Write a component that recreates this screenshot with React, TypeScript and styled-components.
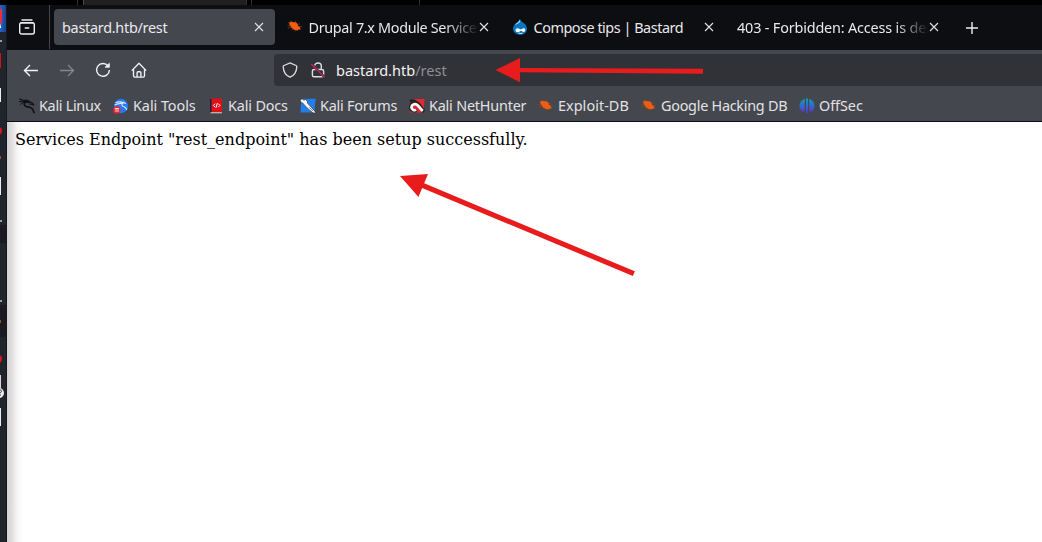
import React from "react";
import styled, { createGlobalStyle } from "styled-components";

const Global = createGlobalStyle`
  * { box-sizing: border-box; }
  html, body { margin: 0; width: 1042px; height: 542px; overflow: hidden; background: #000; }
`;

const Desktop = styled.div`
  position: relative;
  width: 1042px;
  height: 542px;
  display: flex;
  flex-direction: column;
  background: #000;
  font-family: "Noto Sans", sans-serif;
`;
const Taskbar = styled.div`
  height: 5px;
  display: flex;
  padding-left: 77px;
`;
const TaskItem = styled.div<{ $w: number; $on?: boolean }>`
  width: ${(p) => p.$w}px;
  border-left: 1px solid ${(p) => (p.$on ? "#4a4a4a" : "#303030")};
  background: ${(p) => (p.$on ? "#202020" : "#000")};
`;
const Body = styled.div`
  display: flex;
  height: 537px;
`;
const Dock = styled.div`
  width: 7px;
  flex: none;
  background: #20242c;
  overflow: hidden;
`;
const Browser = styled.div`
  width: 1035px;
  display: flex;
  flex-direction: column;
`;
const TabBar = styled.div`
  height: 45px;
  display: flex;
  align-items: flex-start;
  background: #0d0e12;
  color: #fbfbfe;
`;
const ViewButton = styled.div`
  width: 43px;
  height: 44px;
  padding: 13px 0 0 11px;
  border-right: 1px solid #45474d;
`;
const Tabs = styled.div`
  display: flex;
  gap: 4px;
  padding: 4px 0 0 4px;
`;
const Tab = styled.div<{ $active?: boolean }>`
  width: 221px;
  height: 36px;
  border-radius: 4px;
  background: ${(p) => (p.$active ? "#45474f" : "transparent")};
  display: flex;
  align-items: center;
  padding: 0 10px 0 8px;
`;
const Favicon = styled.span`
  display: flex;
  width: 16px;
  margin-right: 5.5px;
`;
const TabTitle = styled.span<{ $ls: number; $fade?: boolean }>`
  flex: 1;
  min-width: 0;
  overflow: hidden;
  white-space: nowrap;
  font-size: 14.4px;
  line-height: 22px;
  padding-top: 2px;
  letter-spacing: ${(p) => p.$ls}px;
  color: #e9e9ec;
  ${(p) => p.$fade && "mask-image: linear-gradient(to left, transparent 0, #000 34px); margin-right: -1px;"}
`;
const CloseBox = styled.span`
  flex: none;
  width: 12px;
  height: 36px;
  display: flex;
  align-items: center;
  justify-content: center;
`;
const NewTab = styled.div`
  padding: 16px 0 0 15px;
  display: flex;
`;
const NavBar = styled.div`
  height: 37px;
  display: flex;
  align-items: center;
  padding-top: 3px;
  background: #45474e;
`;
const NavButtons = styled.div`
  width: 267px;
  display: flex;
  gap: 20px;
  padding-left: 16px;
`;
const UrlBar = styled.div`
  flex: 1;
  height: 32px;
  border-radius: 4px 0 0 4px;
  background: #313237;
  display: flex;
  align-items: center;
  padding-left: 8px;
  gap: 12px;
`;
const UrlText = styled.span`
  font-size: 14.5px;
  letter-spacing: 0.02px;
  color: #f3f3f5;
  margin-left: -2px;
  span { color: #8e8f94; }
`;
const Bookmarks = styled.div`
  height: 35px;
  background: #45474e;
  border-bottom: 1px solid #0d0e12;
  display: flex;
  padding-left: 12px;
`;
const Bookmark = styled.div<{ $w: number }>`
  width: ${(p) => p.$w}px;
  flex: none;
  height: 38px;
  display: flex;
  align-items: center;
  gap: 4px;
`;
const BookmarkLabel = styled.span<{ $ls: number }>`
  font-size: 14.4px;
  line-height: 20px;
  letter-spacing: ${(p) => p.$ls}px;
  white-space: nowrap;
  color: #e2e2e5;
`;
const Page = styled.main`
  flex: 1;
  padding: 8px;
  background: linear-gradient(to right, #d4d0d2 0, #e2dfe0 5px, #f6f5f5 10px, #fff 16px);
  font: 16px/19px "DejaVu Serif", serif;
  color: #000;
`;
const Annotations = styled.svg`
  position: absolute;
  left: 0;
  top: 0;
  pointer-events: none;
`;

const Close = () => (
  <CloseBox>
    <svg width="10" height="10" viewBox="0 0 10 10" stroke="#e4e4e7" strokeWidth="1.1">
      <path d="M1 1l8 8M9 1L1 9" />
    </svg>
  </CloseBox>
);
const Bug = () => (
  <svg width="16" height="16" viewBox="0 0 16 16">
    <path d="M2 4l2-1.6 2.3.9 1.3-.3 2.2.9 1.2 1.7-.2 1 2 1.3.9 2.6-2.3.1-.5 1-3.1-.7-2.7-1.5-1.4-1.9L2.6 6z" fill="#ee5d10" />
    <path d="M3 4.3L1 3.4M3.5 6.8L.5 6.6M4.5 8.3l-3.7.9M6.5 9.9L4.8 11.4M4.6 3.2L3.8 1.7M7.8 4l1.1-2.1M10.1 5.6l2.8-.8M12 7.8l3.2-.3M9 11l-1.4 1.4" fill="none" stroke="#a5471d" strokeWidth=".6" />
  </svg>
);
const Drupal = () => (
  <svg width="16" height="16" viewBox="0 0 16 16">
    <path d="M8 .2c.7 2 2.2 2.4 4 4 2.1 1.8 3 3.7 3 5.5 0 3.7-3 6.1-7 6.1S1 13.3 1 9.6c0-2 1.2-3.8 3.1-5.3C5.7 3.2 7.3 2.2 8 .2z" fill="#0875be" />
    <path d="M8 .2C7.4 2.4 4.2 3.9 2.7 6c1.6-.9 4.9-1.4 5.6-3.6z" fill="#8ccdf0" />
    <path d="M3.5 11.3c0-1.5 1.3-2.2 2.5-2 1.3.2 1.8 1.2 2.7 1.2.8 0 1.6-1.3 2.9-1.3 1 0 1.7.7 1.7 1.7 0 1.2-.7 2-1.7 2-1.1 0-1.8-1.2-2.6-1.2-.9 0-1.6 1.5-3.1 1.5-1.3 0-2.4-.7-2.4-1.9z" fill="#fff" />
    <path d="M6.4 14c1.4.7 2.8.7 4 0" fill="none" stroke="#fff" />
  </svg>
);
const Dragon = ({ color = "#101114" }: { color?: string }) => (
  <g fill="none" stroke={color} strokeLinejoin="round">
    <path d="M.3.9l3.2 1.4L8 2.4l3 1.3M0 3.5l3.5.2L8 3.4l3 .6 1.5.7" strokeWidth="1.15" />
    <path d="M1.2 6.5l2.3-1.6L7 4.3l3 .6" strokeWidth=".9" />
    <path d="M6.7 3.5C4.2 5.6 5.1 8.5 8.2 8.8c2.7.3 5.1 1 5.7 2.8.5 1.4.7 2.2 1.5 3.6" strokeWidth="1.7" />
    <path d="M10.2 4l3.2 1.1 1.5 2-2.4-.8-2.2-.3" strokeWidth="1.1" />
  </g>
);
const KaliLinux = () => <svg width="16" height="16" viewBox="0 0 16 16"><Dragon /></svg>;
const KaliTools = () => (
  <svg width="16" height="16" viewBox="0 0 16 16">
    <circle cx="8" cy="8" r="7.2" fill="#2879f0" />
    <path d="M2.5 4.8c3-1.4 5.8-1.2 8.4.1M1.7 7c3-1.5 5.4-1.9 7.8-1.5-1.8 2.3.5 3 2.1 3.5 1.2.5 1.8 1.5 2.1 2.8M10 4l2.8 1.8" fill="none" stroke="#d5e8ff" strokeWidth="1.1" />
    <circle cx="3.8" cy="12" r="3.7" fill="#e62631" />
    <path d="M1.8 10.5h4M3 10.5V14M5 10.5V14" stroke="#fff" strokeWidth=".8" />
  </svg>
);
const Docs = () => (
  <svg width="16" height="16" viewBox="0 0 16 16">
    <path d="M2 1h2v14H2z" fill="#18233f" />
    <path d="M3.5.5H14v13.7H3.5z" fill="#df1118" />
    <path d="M2.5 14.2h11.4v1.1H2.5z" fill="#e1c6c6" />
    <path d="M7.1 5.7L5.4 7.4l1.7 1.7M10.3 5.7L12 7.4l-1.7 1.7M9.4 5.1L8 9.7" fill="none" stroke="#fff" strokeWidth="1" />
  </svg>
);
const Forums = () => (
  <svg width="16" height="16" viewBox="0 0 16 16">
    <path d="M1.2.8h14.5L14.3 14.5H.6z" fill="#207eee" />
    <path d="M0 1.8L2 .9l2 1.2 1.8-.6 1.8 2.3-.3 1.3 2.1 2 5.5 6.1.5 2.4-2.8-1L8 10.7 4.8 7.6 3.2 5.4 1.2 4.6z" fill="#f6f7f4" stroke="#20262d" strokeWidth=".6" />
    <path d="M9.4 9.4l3.8 3.6" stroke="#202a35" strokeWidth=".6" />
  </svg>
);
const NetHunter = () => (
  <svg width="16" height="16" viewBox="0 0 16 16">
    <path d="M1.8 1h13.8l-1.1 13.5H.8z" fill="#e6252d" />
    <path d="M.2 2.2L3 1l3.2.8 2.2 1.5-3.7.8-2.4 1.4z" fill="#202227" />
    <path d="M7.1 12C4.6 13.5 1.8 11.8 1.9 9c.1-3.1 3.9-5 6.8-3.2 2.4 1.6 2.8 4.7 6.4 8" fill="none" stroke="#272326" strokeWidth="4" />
    <path d="M7.3 11.6c-2.2 1.3-4.8-.1-4.8-2.4.1-2.6 3.3-4 5.6-2.4 2.2 1.5 3 4 5.7 6.1" fill="none" stroke="#fbf9f8" strokeWidth="2.8" />
    <path d="M6.7 10.7l1.7 2.2" stroke="#272326" strokeWidth=".8" />
  </svg>
);
const OffSec = () => (
  <svg width="16" height="16" viewBox="0 0 16 16">
    <defs>
      <linearGradient id="offsec" x2="0" y2="1">
        <stop stopColor="#109dba" />
        <stop offset=".5" stopColor="#3269c9" />
        <stop offset="1" stopColor="#6d24ce" />
      </linearGradient>
    </defs>
    <path d="M5.8.8C2.5 1.9.5 4.7.5 8c0 2.7 1.5 5 3.6 6.1 1.2-.6 1.7-1.8 1.7-3.5zM10.2.8c3.3 1.1 5.3 3.9 5.3 7.2 0 2.7-1.5 5-3.6 6.1-1.2-.6-1.7-1.8-1.7-3.5zM7 .5h2V11l.2 4.3L8 16l-1.2-.7L7 11z" fill="url(#offsec)" />
  </svg>
);

const bookmarks = [
  { name: "Kali Linux", w: 94, ls: -0.3, icon: <KaliLinux /> },
  { name: "Kali Tools", w: 95, ls: -0.05, icon: <KaliTools /> },
  { name: "Kali Docs", w: 92, ls: -0.15, icon: <Docs /> },
  { name: "Kali Forums", w: 109, ls: -0.22, icon: <Forums /> },
  { name: "Kali NetHunter", w: 129, ls: -0.2, icon: <NetHunter /> },
  { name: "Exploit-DB", w: 103, ls: 0.05, icon: <Bug /> },
  { name: "Google Hacking DB", w: 158, ls: -0.26, icon: <Bug /> },
  { name: "OffSec", w: 80, ls: -0.05, icon: <OffSec /> },
];

const DockIcons = () => (
  <svg width="7" height="537" viewBox="0 5 7 537">
    <defs>
      <linearGradient id="dockGlow">
        <stop stopColor="#2367d2" />
        <stop offset="1" stopColor="#183b79" />
      </linearGradient>
    </defs>
    <path d="M0 5h7v27H0z" fill="url(#dockGlow)" />
    <path d="M0 9h2v14H0z" fill="#f12c34" />
    <path d="M0 27l1-4v5H0z" fill="#fff" />
    <path d="M0 225h7v18H0zM0 305h7v32H0z" fill="#1b1a23" />
    <path d="M0 40h2v2H0zM0 220h2v2H0zM0 300h2v2H0z" fill="#999ca0" />
    <path d="M0 53h1v15H0z" fill="#cc1418" />
    <path d="M0 88h1v14H0zM0 177h1v18H0zM0 408h1v18H0z" fill="#eee" />
    <path d="M0 156h1v3H0zM0 320h1v3H0z" fill="#95562b" />
    <circle cx="-2" cy="131" r="4" fill="#e3141b" />
    <circle cx="-2" cy="359" r="4" fill="#e3141b" />
    <path d="M0 375h1v13H0z" fill="#eccdd0" />
    <circle cx="-1" cy="393" r="5" fill="#eee" />
    <path d="M0 390c2 0 2 2 0 3M0 395h1" fill="none" stroke="#24262b" />
    <path d="M6.5 5v537" stroke="#15181e" />
  </svg>
);

export default function App() {
  return (
    <>
      <Global />
      <Desktop>
        <Taskbar>
          <TaskItem $w={6} />
          <TaskItem $w={163} $on />
          <TaskItem $w={5} />
          <TaskItem $w={168} />
          <TaskItem $w={600} />
        </Taskbar>
        <Body>
          <Dock><DockIcons /></Dock>
          <Browser>
            <TabBar>
              <ViewButton>
                <svg width="18" height="18" viewBox="0 0 18 18" fill="none" stroke="#eeeef0" strokeWidth="1.4" strokeLinecap="round">
                  <path d="M4 2h10M3 4.7h12" />
                  <rect x="1.7" y="4.7" width="14.6" height="11.3" rx="2" />
                  <path d="M7.2 10h3.6" />
                </svg>
              </ViewButton>
              <Tabs>
                <Tab $active><TabTitle $ls={-0.26}>bastard.htb/rest</TabTitle><Close /></Tab>
                <Tab><Favicon><Bug /></Favicon><TabTitle $ls={-0.33} $fade>Drupal 7.x Module Services</TabTitle><Close /></Tab>
                <Tab><Favicon><Drupal /></Favicon><TabTitle $ls={-0.46}>Compose tips | Bastard</TabTitle><Close /></Tab>
                <Tab><TabTitle $ls={-0.16} $fade>403 - Forbidden: Access is denied.</TabTitle><Close /></Tab>
              </Tabs>
              <NewTab>
                <svg width="14" height="14" viewBox="0 0 14 14" stroke="#eeeef0" strokeWidth="1.4"><path d="M7 1v12M1 7h12" /></svg>
              </NewTab>
            </TabBar>
            <NavBar>
              <NavButtons>
                <svg width="16" height="16" viewBox="0 0 16 16" fill="none" stroke="#f3f3f5" strokeWidth="1.4"><path d="M15 8.5H1.5M7 3L1.5 8.5 7 14" /></svg>
                <svg width="16" height="16" viewBox="0 0 16 16" fill="none" stroke="#85868b" strokeWidth="1.3"><path d="M1 8.5h13.5M9 3l5.5 5.5L9 14" /></svg>
                <svg width="16" height="16" viewBox="0 0 16 16" fill="none" stroke="#f3f3f5" strokeWidth="1.4"><path d="M13.1 4A6.4 6.4 0 1 0 14.4 8" /><path d="M14.4 1.3v4H10z" fill="#f3f3f5" strokeWidth=".7" /></svg>
                <svg width="16" height="16" viewBox="0 0 16 16" fill="none" stroke="#f3f3f5" strokeWidth="1.35"><path d="M.8 8.6L8 1.3l7.2 7.3M2.5 7.2v6.6c0 .8.5 1.3 1.3 1.3h8.4c.8 0 1.3-.5 1.3-1.3V7.2" strokeLinejoin="round" /><path d="M6.1 15v-4.3c0-.6.4-1 1-1h1.8c.6 0 1 .4 1 1V15" /></svg>
              </NavButtons>
              <UrlBar>
                <svg width="16" height="16" viewBox="0 0 16 16" fill="none" stroke="#dddde1" strokeWidth="1.35"><path d="M8 .9l6 2.6c.7.3.9.7.8 1.5-.3 4-2.2 8.5-6.8 10.2C3.4 13.5 1.5 9 1.2 5c-.1-.8.1-1.2.8-1.5z" /></svg>
                <svg width="16" height="16" viewBox="0 0 16 16" fill="none" stroke="#dddde1" strokeWidth="1.4"><path d="M4.7 3.8C4.7 2.1 6.2 1 8 1s3.3 1.2 3.3 3v3M4 7.5h8c1 0 1.6.6 1.6 1.5v4.2c0 .9-.6 1.5-1.6 1.5H4c-1 0-1.6-.6-1.6-1.5V9c0-.9.6-1.5 1.6-1.5z" /><path d="M1.5 2.2l13 13" stroke="#313237" strokeWidth="2.4" /><path d="M1.3 2l13.4 13.4" stroke="#df2354" strokeWidth="1.1" /></svg>
                <UrlText>bastard.htb<span>/rest</span></UrlText>
              </UrlBar>
            </NavBar>
            <Bookmarks>
              {bookmarks.map((b) => (
                <Bookmark key={b.name} $w={b.w}>
                  {b.icon}
                  <BookmarkLabel $ls={b.ls}>{b.name}</BookmarkLabel>
                </Bookmark>
              ))}
            </Bookmarks>
            <Page>Services Endpoint "rest_endpoint" has been setup successfully.</Page>
          </Browser>
        </Body>
        <Annotations width="1042" height="542" fill="#e81c1c">
          <path d="M495.5 70L520 58v10l183 .8v5L520 72.2v10z" />
          <path d="M400 176l28-2-3.8 9.3 210.6 88-1.9 4.7-210.8-88-3.6 9z" />
        </Annotations>
      </Desktop>
    </>
  );
}
